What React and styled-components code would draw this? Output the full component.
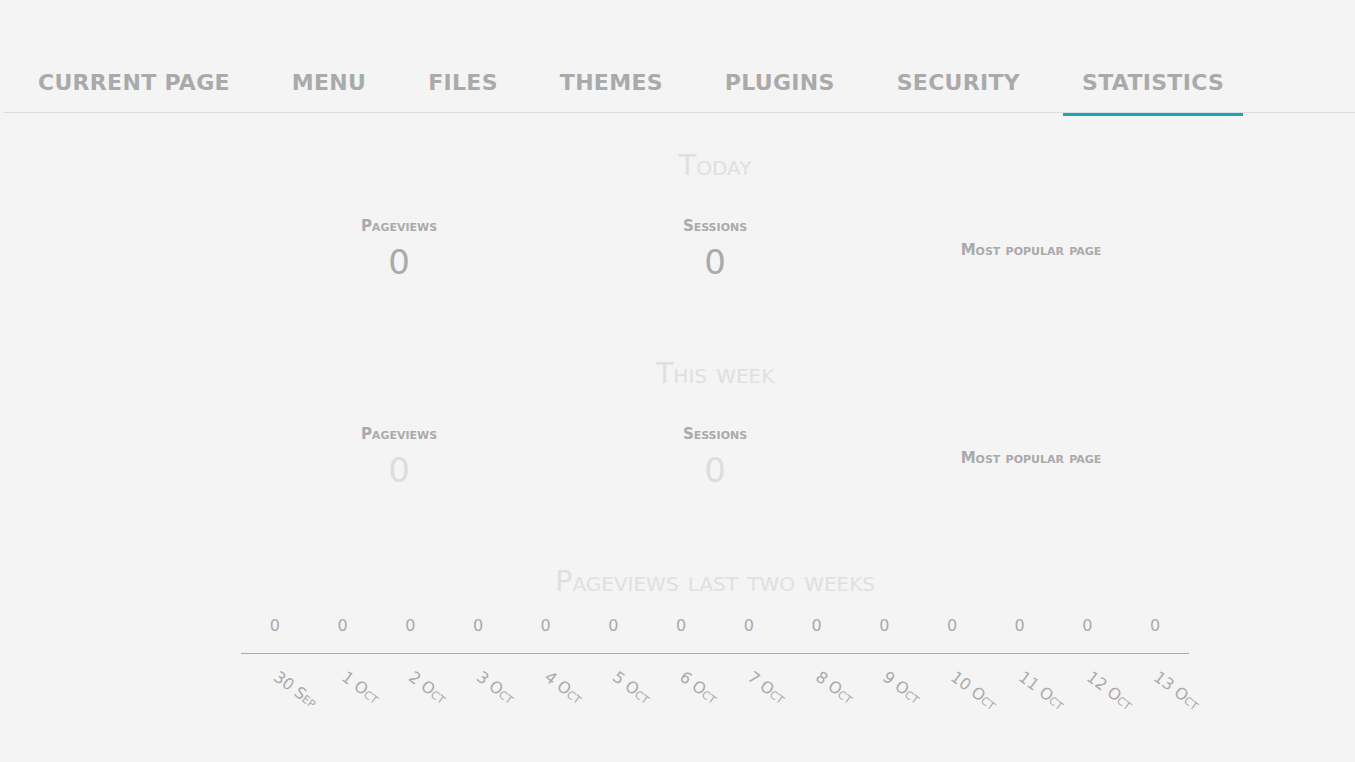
import styled, { createGlobalStyle } from 'styled-components';

const GlobalStyle = createGlobalStyle`
 body {
  margin: 0;
  background-color: #f4f4f4;
  font-family: 'DejaVu Sans', Verdana, sans-serif;
 }
`;

const Nav = styled.nav`
 margin-left: 4px;
 border-bottom: 1px solid #dddddd;
`;

const TabList = styled.ul`
 display: flex;
 gap: 24px;
 margin: 0;
 padding: 0 0 0 15px;
 list-style: none;
`;

const Tab = styled.li`
 position: relative;
 padding: 68px 19px 14px 19px;
 line-height: 30px;
 font-weight: 700;
 font-size: 22px;
 letter-spacing: 0.3px;
 color: #aaaaaa;
 text-transform: uppercase;
 cursor: pointer;

 &::after {
  content: '';
  display: ${({ active }) => (active ? 'block' : 'none')};
  position: absolute;
  left: 0;
  right: 0;
  bottom: -4px;
  height: 3px;
  background-color: #16a6b7;
 }
`;

const Main = styled.main`
 width: 948px;
 margin-left: 241px;
 padding-top: 36px;
`;

const SectionTitle = styled.h2`
 margin: 0;
 padding-bottom: 2px;
 font-size: 29px;
 line-height: 32px;
 font-weight: 400;
 font-variant: small-caps;
 text-align: center;
 color: #e0e0e0;
`;

const StatRow = styled.div`
 display: grid;
 grid-template-columns: repeat(3, 1fr);
 align-items: center;
 margin: 34px 0 75px 0;
`;

const Stat = styled.div`
 display: flex;
 flex-direction: column;
 align-items: center;
`;

const Label = styled.div`
 font-size: 15px;
 line-height: 18px;
 font-weight: 700;
 font-variant: small-caps;
 color: #aaaaaa;
`;

const Value = styled.div`
 margin-top: 7px;
 font-size: 34px;
 line-height: 40px;
 color: ${({ faded }) => (faded ? '#dddddd' : '#aaaaaa')};
`;

const Chart = styled.div`
 margin-top: 17px;
`;

const Bars = styled.div`
 display: grid;
 grid-template-columns: repeat(14, minmax(0, 1fr));
 padding-bottom: 17px;
 border-bottom: 1px solid #aaaaaa;
`;

const BarValue = styled.div`
 text-align: center;
 font-size: 16px;
 line-height: 20px;
 color: #aaaaaa;
`;

const Dates = styled.div`
 display: grid;
 grid-template-columns: repeat(14, minmax(0, 1fr));
 padding-top: 13px;
 height: 70px;
`;

const DateCell = styled.div`
 min-width: 0;
 padding-left: 40px;
`;

const DateText = styled.span`
 display: inline-block;
 white-space: nowrap;
 font-size: 16px;
 line-height: 18px;
 font-variant: small-caps;
 color: #aaaaaa;
 transform: rotate(37deg);
 transform-origin: 0 0;
`;

const tabs = ['Current page', 'Menu', 'Files', 'Themes', 'Plugins', 'Security', 'Statistics'];

const days = [
 '30 Sep', '1 Oct', '2 Oct', '3 Oct', '4 Oct', '5 Oct', '6 Oct',
 '7 Oct', '8 Oct', '9 Oct', '10 Oct', '11 Oct', '12 Oct', '13 Oct',
];

const StatBlock = ({ title, pageviews, sessions, faded }) => (
 <>
  <SectionTitle>{title}</SectionTitle>
  <StatRow>
   <Stat>
    <Label>Pageviews</Label>
    <Value faded={faded}>{pageviews}</Value>
   </Stat>
   <Stat>
    <Label>Sessions</Label>
    <Value faded={faded}>{sessions}</Value>
   </Stat>
   <Stat>
    <Label>Most popular page</Label>
   </Stat>
  </StatRow>
 </>
);

const App = () => {
 return (
  <>
   <GlobalStyle />
   <Nav>
    <TabList>
     {tabs.map((tab) => (
      <Tab key={tab} active={tab === 'Statistics'}>
       {tab}
      </Tab>
     ))}
    </TabList>
   </Nav>
   <Main>
    <StatBlock title="Today" pageviews={0} sessions={0} />
    <StatBlock title="This week" pageviews={0} sessions={0} faded />
    <SectionTitle>Pageviews last two weeks</SectionTitle>
    <Chart>
     <Bars>
      {days.map((day) => (
       <BarValue key={day}>0</BarValue>
      ))}
     </Bars>
     <Dates>
      {days.map((day) => (
       <DateCell key={day}>
        <DateText>{day}</DateText>
       </DateCell>
      ))}
     </Dates>
    </Chart>
   </Main>
  </>
 );
};

export default App;
